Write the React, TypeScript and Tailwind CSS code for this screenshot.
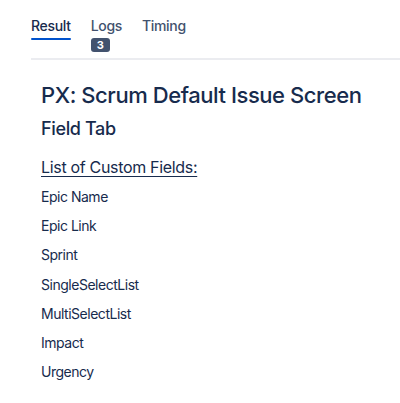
export default function App() {
  const fields = [
    "Epic Name",
    "Epic Link",
    "Sprint",
    "SingleSelectList",
    "MultiSelectList",
    "Impact",
    "Urgency",
  ];

  return (
    <div className="min-h-[403px] bg-white font-['Inter',sans-serif] text-[#172B4D]">
      <div className="pl-[31px] pt-[16px]">
        <div className="flex gap-[20px] border-b-2 border-[#EBECF0] pb-[6px] tracking-[-0.02em]">
          <div className="flex flex-col">
            <span className="text-[14px] font-medium leading-[20px] text-[#172B4D]">Result</span>
            <span className="mt-[2px] h-[2px] w-full rounded bg-[#0052CC]" />
          </div>
          <div className="flex flex-col items-start">
            <span className="text-[14px] font-medium leading-[20px] text-[#42526E]">Logs</span>
            <span className="mt-[2px] rounded-[3px] bg-[#42526E] px-[6px] text-[11px] font-bold leading-[14px] tracking-normal text-white">
              3
            </span>
          </div>
          <span className="text-[14px] font-medium leading-[20px] text-[#42526E]">Timing</span>
        </div>
      </div>

      <div className="pl-[41px] pr-[16px] pt-[22px]">
        <h1 className="whitespace-nowrap text-[22px] font-medium leading-[26px] tracking-[-0.02em]">
          PX: Scrum Default Issue Screen
        </h1>
        <h2 className="mt-[9px] text-[18px] font-medium leading-[24px] tracking-[-0.02em]">Field Tab</h2>
        <p className="mt-[16px] text-[16px] leading-[20px] tracking-[-0.02em] underline underline-offset-[3px]">
          List of Custom Fields:
        </p>
        <ul className="mt-[10px] flex flex-col gap-[9.2px] tracking-[-0.03em]">
          {fields.map((f) => (
            <li key={f} className="text-[14px] leading-[20px]">
              {f}
            </li>
          ))}
        </ul>
      </div>
    </div>
  );
}
